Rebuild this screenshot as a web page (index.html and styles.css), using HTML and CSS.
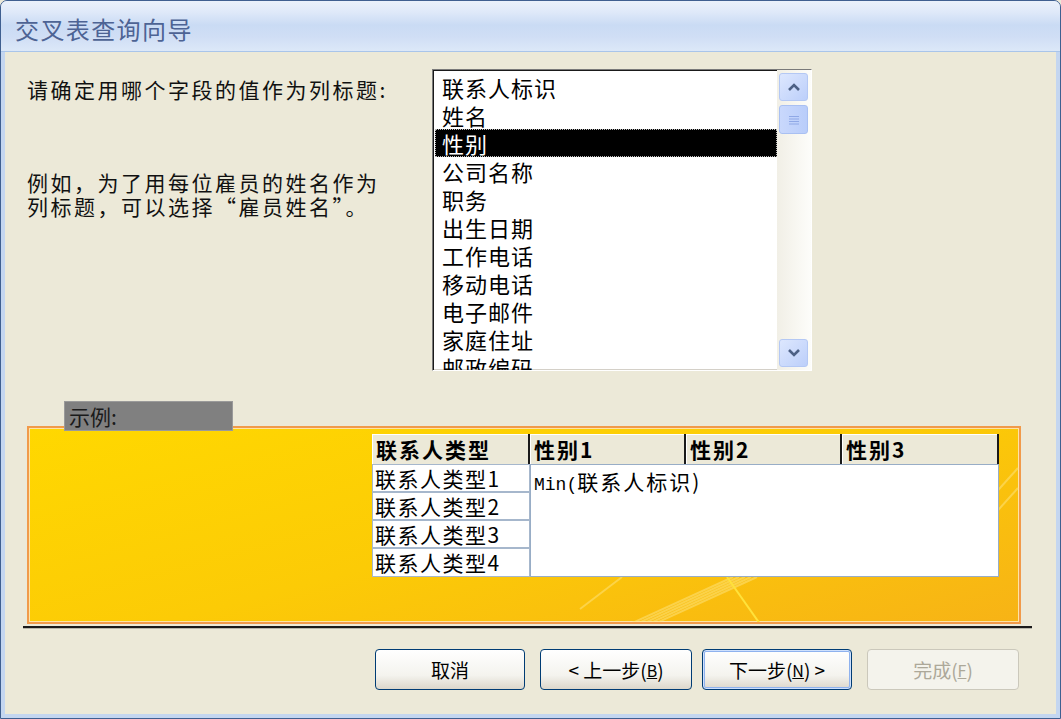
FILE: index.html
```html
<!DOCTYPE html>
<html lang="zh-CN">
<head>
    <meta charset="UTF-8">
    <title>交叉表查询向导</title>
    <link rel="stylesheet" href="styles.css">
</head>
<body>
    <div class="window">
        <div class="titlebar">交叉表查询向导</div>
        <div class="frame">
            <div class="client">
                <div class="top">
                    <div class="prompt">
                        <p class="ask">请确定用哪个字段的值作为列标题:</p>
                        <p class="hint">例如，为了用每位雇员的姓名作为<br>列标题，可以选择“雇员姓名”。</p>
                    </div>
                    <div class="listbox">
                        <ul class="items">
                            <li>联系人标识</li>
                            <li>姓名</li>
                            <li class="selected">性别</li>
                            <li>公司名称</li>
                            <li>职务</li>
                            <li>出生日期</li>
                            <li>工作电话</li>
                            <li>移动电话</li>
                            <li>电子邮件</li>
                            <li>家庭住址</li>
                            <li>邮政编码</li>
                        </ul>
                        <div class="scrollbar">
                            <div class="sb-btn">
                                <svg width="14" height="10" viewBox="0 0 14 10"><path d="M2 8 L7 3 L12 8" fill="none" stroke="#4d6185" stroke-width="2.6"/></svg>
                            </div>
                            <div class="sb-thumb">
                                <svg width="12" height="12" viewBox="0 0 12 12"><path d="M1 2.5 H11 M1 5 H11 M1 7.5 H11 M1 10 H11" stroke="#8fa8e6" stroke-width="1"/></svg>
                            </div>
                            <div class="sb-track"></div>
                            <div class="sb-btn">
                                <svg width="14" height="10" viewBox="0 0 14 10"><path d="M2 2 L7 7 L12 2" fill="none" stroke="#4d6185" stroke-width="2.6"/></svg>
                            </div>
                        </div>
                    </div>
                </div>

                <div class="example">
                    <div class="example-label">示例:</div>
                    <div class="panel">
                        <!-- decorative stripes of the sample background -->
                        <svg class="deco" width="991" height="194" viewBox="0 0 991 194">
                            <g stroke="#fde27a" stroke-opacity="0.55" stroke-width="2" fill="none">
                                <path d="M601 196 L704 149"/>
                                <path d="M607 196 L710 149"/>
                                <path d="M613 196 L716 149"/>
                                <path d="M619 196 L722 149"/>
                                <path d="M625 196 L728 149"/>
                                <path d="M551 181 L593 149"/>
                                <path d="M962 70 L989 40"/>
                                <path d="M962 90 L989 60"/>
                            </g>
                            <path d="M698 149 L731 196" stroke="#ffe23a" stroke-width="2" fill="none"/>
                        </svg>
                        <div class="grid">
                            <div class="hd">联系人类型</div>
                            <div class="hd">性别1</div>
                            <div class="hd">性别2</div>
                            <div class="hd">性别3</div>
                            <div class="rl">联系人类型1</div>
                            <div class="data"><span class="mono">Min(</span>联系人标识)</div>
                            <div class="rl">联系人类型2</div>
                            <div class="rl">联系人类型3</div>
                            <div class="rl">联系人类型4</div>
                        </div>
                    </div>
                </div>

                <div class="rule"></div>

                <div class="buttons">
                    <button class="btn cancel">取消</button>
                    <button class="btn back">&lt; 上一步(<u>B</u>)</button>
                    <button class="btn next default">下一步(<u>N</u>) &gt;</button>
                    <button class="btn finish" disabled>完成(<u>F</u>)</button>
                </div>
            </div>
        </div>
    </div>
</body>
</html>
```

FILE: styles.css
```css
/* General */
body {
    margin: 0;
    background-color: #ece9d8;
    font-family: "Noto Sans CJK SC", "Liberation Sans", sans-serif;
    color: #000;
}
.window {
    width: 1061px;
    height: 719px;
    box-sizing: border-box;
    border: 1px solid #3f5f90;
    border-radius: 7px 7px 0 0;
    background-color: #c4d6f0;
    display: flex;
    flex-direction: column;
    overflow: hidden;
}
.titlebar {
    height: 51px;
    box-sizing: border-box;
    padding: 5px 0 0 14px;
    display: flex;
    align-items: center;
    font-size: 24px;
    letter-spacing: 1.4px;
    color: #4d6394;
    background: linear-gradient(#eaf1fb 0%, #dfe9f9 22%, #cadbf4 48%, #d0def5 72%, #dce8f8 100%);
    border-bottom: 1px solid #a9c5ea;
}
.frame {
    flex: 1;
    display: flex;
    padding: 0 4px 4px;
}
.client {
    flex: 1;
    background-color: #ece9d8;
    padding: 17px 35px 0 22px;
    display: flex;
    flex-direction: column;
}

/* Top: prompt + field list */
.top {
    display: flex;
    height: 302px;
}
.prompt {
    width: 405px;
    font-size: 21px;
    letter-spacing: 2.5px;
    line-height: 24px;
    color: #111;
}
.ask {
    margin: 8px 0 0;
}
.hint {
    margin: 69px 0 0;
}
.listbox {
    width: 380px;
    height: 302px;
    box-sizing: border-box;
    border: 1px solid;
    border-color: #7a7a7a #fff #fff #7a7a7a;
    box-shadow: inset 1px 1px #1a1a1a, inset -1px -1px #d4d0c8;
    background-color: #fff;
    display: flex;
}
.items {
    flex: 1;
    list-style: none;
    margin: 0;
    padding: 3px 0 0 2px;
    overflow: hidden;
}
.items li {
    height: 28px;
    line-height: 28px;
    padding-left: 7px;
    font-size: 22px;
    letter-spacing: 1px;
    white-space: nowrap;
}
.items li.selected {
    background-color: #000;
    color: #fff;
    outline: 1px dotted #bbb;
    outline-offset: -1px;
}
.scrollbar {
    width: 34px;
    box-sizing: border-box;
    padding: 3px 3px 3px 2px;
    display: flex;
    flex-direction: column;
    background: linear-gradient(90deg, #f1efe6, #fdfdfa);
}
.sb-btn, .sb-thumb {
    height: 28px;
    box-sizing: border-box;
    border: 1px solid #b4c8f4;
    border-radius: 3px;
    background: linear-gradient(135deg, #dde7fe, #bccffa);
    display: flex;
    align-items: center;
    justify-content: center;
}
.sb-thumb {
    margin-top: 4px;
    height: 29px;
    border-color: #a9c0f2;
    background: linear-gradient(90deg, #c9d8fc, #b9cdfa);
}
.sb-track {
    flex: 1;
}

/* Sample area */
.example {
    margin-top: 30px;
}
.example-label {
    position: relative;
    z-index: 1;
    width: 169px;
    height: 30px;
    box-sizing: border-box;
    margin: 0 0 -5px 37px;
    padding-left: 4px;
    background-color: #808080;
    border: 1px solid #9a9a9a;
    font-size: 21px;
    line-height: 28px;
    color: #1a1a1a;
}
.panel {
    position: relative;
    height: 198px;
    box-sizing: border-box;
    padding: 6px 0 0 343px;
    border: 2px solid #f19a4a;
    box-shadow: inset 0 0 0 1px #fde3a7;
    background: linear-gradient(165deg, #ffd800 0%, #fccb06 50%, #f7b316 100%);
}
.deco {
    position: absolute;
    left: 0;
    top: 0;
}
.grid {
    position: relative;
    display: grid;
    grid-template-columns: 158px 156px 156px 157px;
    grid-template-rows: 30px 28px 28px 28px 29px;
}
.hd {
    background-color: #ece9d8;
    box-shadow: inset 1px 1px #fff;
    border-right: 2px solid #1a1a1a;
    padding-left: 4px;
    font-size: 21px;
    font-weight: bold;
    letter-spacing: 2px;
    line-height: 30px;
    white-space: nowrap;
}
.rl {
    background-color: #fff;
    border: 1px solid #a6b7cc;
    padding-left: 2px;
    font-size: 21px;
    letter-spacing: 1.5px;
    line-height: 26px;
    white-space: nowrap;
}
.data {
    grid-column: 2 / 5;
    grid-row: 2 / 6;
    background-color: #fff;
    border: 1px solid #98adc6;
    padding: 3px 0 0 3px;
    font-size: 21px;
    letter-spacing: 2px;
    line-height: 26px;
}
.mono {
    font-family: "Liberation Mono", monospace;
    font-size: 18px;
    letter-spacing: 0;
}

/* Bottom */
.rule {
    height: 2px;
    margin: 2px -11px 0 -4px;
    background-color: #1a1a1a;
    border-bottom: 1px solid #b8b6aa;
}
.buttons {
    display: flex;
    justify-content: flex-end;
    margin: 20px 2px 0 0;
}
.btn {
    height: 41px;
    width: 150px;
    box-sizing: border-box;
    border: 1px solid #003c74;
    border-radius: 4px;
    background: linear-gradient(#ffffff, #f4f3ee 65%, #dcd7cb);
    font-family: "Noto Sans CJK SC", sans-serif;
    font-size: 19px;
    color: #000;
    padding: 0;
    display: flex;
    align-items: center;
    justify-content: center;
}
.btn u {
    font-size: 16px;
}
.back {
    width: 152px;
    margin-left: 15px;
}
.next {
    margin-left: 10px;
}
.finish {
    width: 152px;
    margin-left: 15px;
}
.default {
    box-shadow: inset 0 0 0 1px #cee0fd, inset 0 0 0 2px #8fb2ee;
}
.btn:disabled {
    border-color: #cbc8bb;
    color: #aca899;
    background: #f4f3ec;
}
```
